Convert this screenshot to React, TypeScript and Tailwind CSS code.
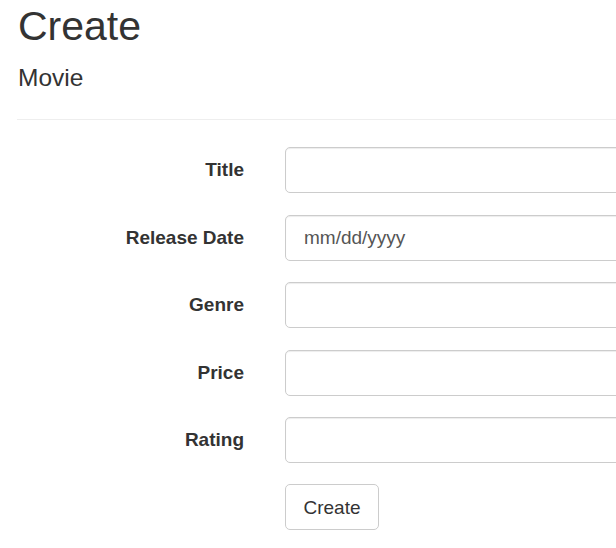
import React from 'react';

const fields = [
  { label: 'Title', placeholder: '' },
  { label: 'Release Date', placeholder: 'mm/dd/yyyy' },
  { label: 'Genre', placeholder: '' },
  { label: 'Price', placeholder: '' },
  { label: 'Rating', placeholder: '' },
];

export default function App() {
  return (
    <div className="w-screen h-screen overflow-hidden bg-white text-[#333] font-['Liberation_Sans',Arial,sans-serif]">
      <div className="pl-[18px]">
        {/* Heading */}
        <h2 className="pt-[4px] text-[41px] leading-[44px] font-normal">Create</h2>
        <h4 className="mt-[17px] text-[24.5px] leading-[26px] font-normal">Movie</h4>
        <hr className="mt-[28px] ml-[-1px] border-0 border-t border-[#eee]" />
      </div>

      {/* Form */}
      <form className="mt-[27px] flex flex-col gap-[21.5px]">
        {fields.map((f) => (
          <div key={f.label} className="flex items-center">
            <label className="w-[244px] shrink-0 text-right text-[19px] font-bold leading-[26px]">
              {f.label}
            </label>
            <input
              type="text"
              placeholder={f.placeholder}
              className="ml-[41px] w-[420px] shrink-0 h-[46px] pl-[18px] pr-[17px] text-[19px] text-[#555] placeholder:text-[#555] bg-white border border-[#ccc] rounded-[5px] shadow-[inset_0_1px_1px_rgba(0,0,0,0.075)] outline-none"
            />
          </div>
        ))}
        <div className="flex -mt-[1px]">
          <button
            type="button"
            className="ml-[285px] w-[94px] h-[46px] pt-[3px] text-[19px] text-[#333] bg-white border border-[#ccc] rounded-[5px]"
          >
            Create
          </button>
        </div>
      </form>
    </div>
  );
}
